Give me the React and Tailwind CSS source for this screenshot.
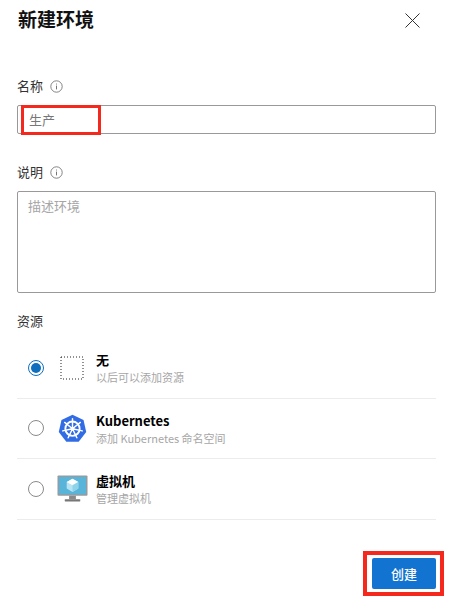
const font = { fontFamily: '"Noto Sans CJK SC", "Noto Sans", sans-serif' };

function Info() {
  return (
    <svg width="13" height="13" viewBox="0 0 13 13" fill="none" className="block">
      <circle cx="6.5" cy="6.5" r="5.7" stroke="#666" strokeWidth="0.8" />
      <path d="M6.5 3.6v.9M6.5 5.6v3.8" stroke="#666" strokeWidth="0.9" />
    </svg>
  );
}

function Radio({ on }) {
  return on ? (
    <span className="w-[16px] h-[16px] rounded-full border-[1.5px] border-[#106ebe] flex items-center justify-center shrink-0">
      <span className="w-[10px] h-[10px] rounded-full bg-[#106ebe]" />
    </span>
  ) : (
    <span className="w-[16px] h-[16px] rounded-full border border-[#8a8a8a] shrink-0" />
  );
}

function NoneIcon() {
  return (
    <svg width="24" height="24" viewBox="0 0 24 24" fill="none">
      <rect x="1" y="1" width="22" height="22" stroke="#222" strokeWidth="1" strokeDasharray="1 2" />
    </svg>
  );
}

function K8s() {
  return (
    <svg width="29" height="29" viewBox="0 0 30 30" fill="none">
      <path d="M15 .8 26.4 6.3 29.2 18.6 21.4 28.6H8.6L.8 18.6 3.6 6.3Z" fill="#326ce5" />
      <circle cx="15" cy="15.2" r="7.4" stroke="#fff" strokeWidth="1.9" />
      <circle cx="15" cy="15.2" r="2" fill="#fff" />
      <path d="M15 15.2V4.8M15 15.2 23.1 8.7M15 15.2 25.1 17.5M15 15.2 19.5 24.6M15 15.2 10.5 24.6M15 15.2 4.9 17.5M15 15.2 6.9 8.7" stroke="#fff" strokeWidth="1.5" strokeLinecap="round" />
    </svg>
  );
}

function Vm() {
  return (
    <svg width="31" height="30" viewBox="0 0 32 30" fill="none">
      <rect x="0.5" y="1" width="31" height="21" rx="1" fill="#9a9a9a" />
      <rect x="2" y="2.5" width="28" height="18" fill="#59b4d9" />
      <path d="M16 4.5 22 7.8v6.7L16 18l-6-3.5V7.8Z" fill="#b8e3f2" />
      <path d="M16 4.5 22 7.8 16 11 10 7.8Z" fill="#fff" />
      <path d="M16 11v7l6-3.5V7.8Z" fill="#8fd3ea" />
      <rect x="12.5" y="22" width="7" height="3.5" fill="#8a8a8a" />
      <rect x="8" y="25.5" width="16" height="2.5" rx="0.5" fill="#777" />
    </svg>
  );
}

function Row({ on, icon, title, sub }) {
  return (
    <div className="flex items-center h-[60.5px] border-b border-[#ececec] pl-[11px]">
      <Radio on={on} />
      <span className="w-[32px] ml-[12px] mr-[8px] flex justify-center shrink-0">{icon}</span>
      <span className="flex flex-col">
        <span className="text-[13px] leading-[19px] font-bold text-black">{title}</span>
        <span className="text-[11px] leading-[16px] text-[#a6a6a6]">{sub}</span>
      </span>
    </div>
  );
}

export default function App() {
  return (
    <div style={font} className="w-[450px] h-[598px] bg-white overflow-hidden relative pl-[17px] pr-[14px]">
      <div className="flex items-center justify-between h-[38px] pr-[16px] pl-[1px]">
        <h1 className="text-[19px] font-bold text-[#111] leading-[38px]">新建环境</h1>
        <svg width="15" height="15" viewBox="0 0 15 15" className="mt-[3px]">
          <path d="M.5.5l14 14M14.5.5l-14 14" stroke="#333" strokeWidth="1" />
        </svg>
      </div>

      <div className="flex items-center gap-[7px] mt-[38px] h-[20px] text-[13px] text-[#333]">
        名称 <Info />
      </div>
      <div className="mt-[9px] h-[29px] border border-[#999] rounded-[2px] flex items-center pl-[11px] text-[13px] text-[#777]">
        生产
      </div>

      <div className="flex items-center gap-[7px] mt-[28px] h-[20px] text-[13px] text-[#333]">
        说明 <Info />
      </div>
      <div className="mt-[9px] h-[102px] border border-[#999] rounded-[2px] pl-[10px] pt-[4px] text-[13px] leading-[20px] text-[#a6a6a6]">
        描述环境
      </div>

      <div className="mt-[18px] h-[20px] flex items-center text-[13px] text-[#333]">资源</div>

      <div className="mt-[7px]">
        <Row on icon={<NoneIcon />} title="无" sub="以后可以添加资源" />
        <Row icon={<K8s />} title="Kubernetes" sub="添加 Kubernetes 命名空间" />
        <Row icon={<Vm />} title="虚拟机" sub="管理虚拟机" />
      </div>

      <button className="absolute left-[372px] top-[558px] w-[64px] h-[31px] bg-[#1274d0] rounded-[2px] text-white text-[13px] font-medium">
        创建
      </button>

      <div className="absolute left-[21px] top-[105px] w-[80px] h-[30px] border-[3px] border-[#f5281d]" />
      <div className="absolute left-[363px] top-[551px] w-[81px] h-[45px] border-[4px] border-[#f5281d]" />
    </div>
  );
}
